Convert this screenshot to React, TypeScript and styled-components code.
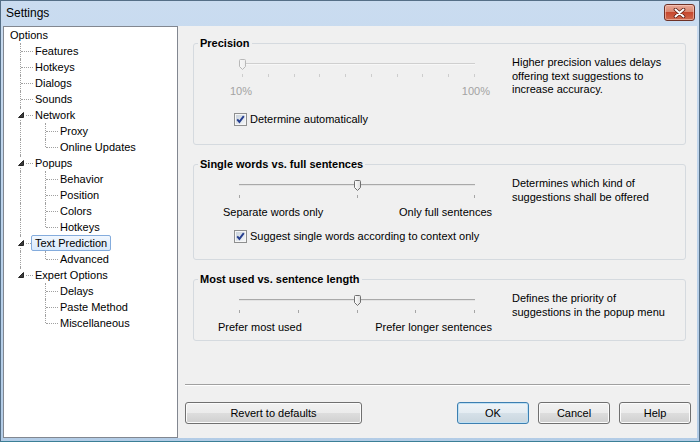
import * as React from "react";
import styled, { createGlobalStyle, css } from "styled-components";

const GlobalStyle = createGlobalStyle`
  html, body {
    margin: 0;
    padding: 0;
    background: #ffffff;
  }
  body {
    font-family: "Liberation Sans", Arial, sans-serif;
    font-size: 11px;
    color: #000;
  }
`;

type TreeNode = { label: string; children?: TreeNode[]; selected?: boolean };

const tree: TreeNode = {
  label: "Options",
  children: [
    { label: "Features" },
    { label: "Hotkeys" },
    { label: "Dialogs" },
    { label: "Sounds" },
    { label: "Network", children: [{ label: "Proxy" }, { label: "Online Updates" }] },
    {
      label: "Popups",
      children: [{ label: "Behavior" }, { label: "Position" }, { label: "Colors" }, { label: "Hotkeys" }],
    },
    { label: "Text Prediction", selected: true, children: [{ label: "Advanced" }] },
    {
      label: "Expert Options",
      children: [{ label: "Delays" }, { label: "Paste Method" }, { label: "Miscellaneous" }],
    },
  ],
};

type FlatRow = {
  label: string;
  depth: number;
  guides: boolean[];
  isLast: boolean;
  hasChildren: boolean;
  selected?: boolean;
};

const flatten = (node: TreeNode, depth: number, guides: boolean[], isLast: boolean): FlatRow[] => {
  const rows: FlatRow[] = [
    { label: node.label, depth, guides, isLast, hasChildren: !!node.children, selected: node.selected },
  ];
  const kids = node.children || [];
  kids.forEach((kid, i) => {
    const childGuides = depth === 0 ? [] : [...guides, !isLast];
    rows.push(...flatten(kid, depth + 1, childGuides, i === kids.length - 1));
  });
  return rows;
};

const rows = flatten(tree, 0, [], true);

export default function App() {
  return (
    <>
      <GlobalStyle />
      <Window>
        <TitleBar>
          <Title>Settings</Title>
          <CloseButton>
            <svg width="13" height="10" viewBox="0 0 13 10">
              <path d="M2.5 1.5 L10.5 8.5 M10.5 1.5 L2.5 8.5" stroke="#5b1c12" strokeWidth="3.6" strokeLinecap="round" />
              <path d="M2.5 1.5 L10.5 8.5 M10.5 1.5 L2.5 8.5" stroke="#ffffff" strokeWidth="2" strokeLinecap="round" />
            </svg>
          </CloseButton>
        </TitleBar>
        <Body>
          <TreePanel>
            {rows.map((r, i) => (
              <TreeRow key={i}>
                {r.guides.map((g, j) => (
                  <Guide key={j} $kind={g ? "pipe" : "blank"} />
                ))}
                {r.depth > 0 && (
                  <Guide $kind={r.isLast ? "ell" : "tee"}>
                    {r.hasChildren && (
                      <Expander>
                        <svg width="10" height="10" viewBox="0 0 10 10">
                          <polygon points="7.5,2.5 7.5,7.5 2.5,7.5" fill="#3c3c3c" stroke="#262626" strokeWidth="1" />
                        </svg>
                      </Expander>
                    )}
                  </Guide>
                )}
                <NodeLabel $selected={r.selected}>{r.label}</NodeLabel>
              </TreeRow>
            ))}
          </TreePanel>

          <RightPanel>
            <Groups>
              <Group $pb={18}>
                <Legend>Precision</Legend>
                <GroupRow>
                  <SliderColumn>
                    <Slider ml={24} width={233} ticks={10} value={0} disabled />
                    <SliderLabels $pl={12} $pr={2} $disabled>
                      <span>10%</span>
                      <span>100%</span>
                    </SliderLabels>
                    <CheckRow $gap={15}>
                      <Checkbox />
                      <span>Determine automatically</span>
                    </CheckRow>
                  </SliderColumn>
                  <Description>
                    Higher precision values delays
                    <br />
                    offering text suggestions to
                    <br />
                    increase accuracy.
                  </Description>
                </GroupRow>
              </Group>

              <Group $pb={16}>
                <Legend>Single words vs. full sentences</Legend>
                <GroupRow>
                  <SliderColumn>
                    <Slider ml={21} width={236} ticks={3} value={0.5} />
                    <SliderLabels $pl={5} $pr={0}>
                      <span>Separate words only</span>
                      <span>Only full sentences</span>
                    </SliderLabels>
                    <CheckRow $gap={11}>
                      <Checkbox />
                      <span>Suggest single words according to context only</span>
                    </CheckRow>
                  </SliderColumn>
                  <Description>
                    Determines which kind of
                    <br />
                    suggestions shall be offered
                  </Description>
                </GroupRow>
              </Group>

              <Group $pb={6}>
                <Legend>Most used vs. sentence length</Legend>
                <GroupRow>
                  <SliderColumn>
                    <Slider ml={21} width={236} ticks={5} value={0.5} />
                    <SliderLabels $pl={0} $pr={0}>
                      <span>Prefer most used</span>
                      <span>Prefer longer sentences</span>
                    </SliderLabels>
                  </SliderColumn>
                  <Description>
                    Defines the priority of
                    <br />
                    suggestions in the popup menu
                  </Description>
                </GroupRow>
              </Group>
            </Groups>

            <Footer>
              <Separator />
              <ButtonRow>
                <Button $width={177}>Revert to defaults</Button>
                <ButtonSpacer />
                <Button $width={72} $default>
                  OK
                </Button>
                <Button $width={72}>Cancel</Button>
                <Button $width={72}>Help</Button>
              </ButtonRow>
            </Footer>
          </RightPanel>
        </Body>
      </Window>
    </>
  );
}

const Slider = ({
  ml,
  width,
  ticks,
  value,
  disabled,
}: {
  ml: number;
  width: number;
  ticks: number;
  value: number;
  disabled?: boolean;
}) => {
  const id = React.useId();
  return (
    <SliderBox $ml={ml} $width={width}>
      <Track $disabled={disabled} />
      <Ticks>
        {Array.from({ length: ticks }).map((_, i) => (
          <Tick key={i} $disabled={disabled} />
        ))}
      </Ticks>
      <Thumb style={{ left: Math.round(value * (width - 1)) - 3 }}>
        <svg width="7" height="11" viewBox="0 0 7 11">
          <defs>
            <linearGradient id={id} x1="0" y1="0" x2="1" y2="0">
              <stop offset="0" stopColor={disabled ? "#f7f7f7" : "#ffffff"} />
              <stop offset="1" stopColor={disabled ? "#efefef" : "#dcdcdc"} />
            </linearGradient>
          </defs>
          <path
            d="M0.5 1.5 Q0.5 0.5 1.5 0.5 H5.5 Q6.5 0.5 6.5 1.5 V7.5 L3.5 10.5 L0.5 7.5 Z"
            fill={`url(#${id})`}
            stroke={disabled ? "#b8b8b8" : "#6f6f6f"}
          />
        </svg>
      </Thumb>
    </SliderBox>
  );
};

const Checkbox = () => {
  const id = React.useId();
  return (
    <svg width="13" height="13" viewBox="0 0 13 13">
      <defs>
        <linearGradient id={id} x1="0" y1="0" x2="1" y2="1">
          <stop offset="0" stopColor="#c9d2dc" />
          <stop offset="1" stopColor="#f4f6f8" />
        </linearGradient>
      </defs>
      <rect x="0.5" y="0.5" width="12" height="12" fill="#f6f6f6" stroke="#8e8f8f" />
      <rect x="2" y="2" width="9" height="9" fill={`url(#${id})`} />
      <path d="M3.2 6.4 L5.4 8.9 L9.8 3.2" stroke="#263f8f" strokeWidth="1.9" fill="none" />
    </svg>
  );
};

const Window = styled.div`
  width: 700px;
  height: 442px;
  box-sizing: border-box;
  display: flex;
  flex-direction: column;
  background: linear-gradient(#cadcf0, #b9d1ea 60%, #b3cce6);
  border: 1px solid #556f87;
  border-bottom-color: #3b7f96;
`;

const TitleBar = styled.div`
  height: 25px;
  flex-shrink: 0;
  display: flex;
  align-items: flex-start;
  justify-content: space-between;
  padding: 0 4px 0 5px;
`;

const Title = styled.div`
  font-size: 12px;
  line-height: 25px;
  color: #000;
`;

const CloseButton = styled.div`
  width: 31px;
  height: 17px;
  margin-top: 3px;
  box-sizing: border-box;
  display: flex;
  align-items: center;
  justify-content: center;
  border: 1px solid #6e3126;
  border-radius: 3px;
  background: linear-gradient(#e9a897 0%, #d98871 45%, #c7482e 50%, #cf6a4f 100%);
  box-shadow: inset 0 0 0 1px rgba(255, 220, 210, 0.5);
`;

const Body = styled.div`
  flex: 1;
  min-height: 0;
  display: flex;
  margin: 0 2px 3px 2px;
  background: #f0f0f0;
`;

const TreePanel = styled.div`
  width: 175px;
  flex-shrink: 0;
  box-sizing: border-box;
  background: #ffffff;
  border: 1px solid #828790;
  padding: 0 0 0 4px;
`;

const TreeRow = styled.div`
  height: 16px;
  display: flex;
  align-items: center;
`;

const Guide = styled.div<{ $kind: "pipe" | "tee" | "ell" | "blank" }>`
  position: relative;
  width: 25px;
  height: 16px;
  flex-shrink: 0;

  &::before {
    content: "";
    position: absolute;
    left: 12px;
    top: 0;
    width: 0;
    height: ${(p) => (p.$kind === "ell" ? "8px" : "16px")};
    border-left: 1px dotted #a0a0a0;
    display: ${(p) => (p.$kind === "blank" ? "none" : "block")};
  }

  &::after {
    content: "";
    position: absolute;
    left: 13px;
    top: 8px;
    width: 12px;
    height: 0;
    border-top: 1px dotted #a0a0a0;
    display: ${(p) => (p.$kind === "tee" || p.$kind === "ell" ? "block" : "none")};
  }
`;

const Expander = styled.div`
  position: absolute;
  left: 8px;
  top: 3px;
  width: 10px;
  height: 10px;
  background: #ffffff;
  z-index: 1;
  display: flex;

  svg {
    display: block;
  }
`;

const NodeLabel = styled.span<{ $selected?: boolean }>`
  position: relative;
  z-index: 2;
  margin-left: -2px;
  padding: 0 3px;
  border: 1px solid transparent;
  border-radius: 2px;
  line-height: 14px;
  white-space: nowrap;
  ${(p) =>
    p.$selected &&
    css`
      background: linear-gradient(#f1f7fe, #d9e9fc);
      border-color: #84acdd;
    `}
`;

const RightPanel = styled.div`
  flex: 1;
  min-width: 0;
  display: flex;
  flex-direction: column;
  padding: 10px 6px 14px 7px;
`;

const Groups = styled.div`
  display: flex;
  flex-direction: column;
  gap: 12px;
  margin: 0 5px 0 8px;
`;

const Group = styled.fieldset<{ $pb: number }>`
  margin: 0;
  min-width: 0;
  padding: 0 0 ${(p) => p.$pb}px 0;
  border: 1px solid #d5dadf;
  border-radius: 3px;
`;

const Legend = styled.legend`
  margin-left: 4px;
  padding: 0 2px;
  font-weight: bold;
  font-size: 11px;
  line-height: 14px;
  color: #000;
`;

const GroupRow = styled.div`
  display: flex;
  align-items: flex-start;
  padding: 6px 0 0 24px;
`;

const SliderColumn = styled.div`
  width: 274px;
  flex-shrink: 0;
  padding-top: 3px;
  display: flex;
  flex-direction: column;
`;

const SliderBox = styled.div<{ $ml: number; $width: number }>`
  position: relative;
  margin-left: ${(p) => p.$ml}px;
  width: ${(p) => p.$width}px;
  height: 20px;
`;

const Track = styled.div<{ $disabled?: boolean }>`
  margin-top: 4px;
  height: 1px;
  background: ${(p) => (p.$disabled ? "#cfcfcf" : "#a9a9a9")};
  border-bottom: 1px solid ${(p) => (p.$disabled ? "#f7f7f7" : "#e3e3e3")};
`;

const Ticks = styled.div`
  display: flex;
  justify-content: space-between;
  margin-top: 9px;
`;

const Tick = styled.div<{ $disabled?: boolean }>`
  width: 1px;
  height: 3px;
  background: ${(p) => (p.$disabled ? "#cdcdcd" : "#a5a5a5")};
`;

const Thumb = styled.div`
  position: absolute;
  top: 0;
  width: 7px;
  height: 11px;

  svg {
    display: block;
  }
`;

const SliderLabels = styled.div<{ $pl: number; $pr: number; $disabled?: boolean }>`
  display: flex;
  justify-content: space-between;
  margin-top: 6px;
  padding: 0 ${(p) => p.$pr}px 0 ${(p) => p.$pl}px;
  line-height: 13px;
  color: ${(p) => (p.$disabled ? "#a3a3a3" : "#000")};
  white-space: nowrap;
`;

const CheckRow = styled.div<{ $gap: number }>`
  display: flex;
  align-items: center;
  gap: 3px;
  margin: ${(p) => p.$gap}px 0 0 16px;
  line-height: 13px;
  white-space: nowrap;

  svg {
    display: block;
    flex-shrink: 0;
  }
`;

const Description = styled.div`
  margin-left: 20px;
  line-height: 13.5px;
  color: #000;
`;

const Footer = styled.div`
  margin-top: auto;
  display: flex;
  flex-direction: column;
`;

const Separator = styled.div`
  height: 0;
  border-top: 1px solid #a0a0a0;
  border-bottom: 1px solid #ffffff;
  margin: 0 1px 16px 0;
`;

const ButtonRow = styled.div`
  display: flex;
  gap: 9px;
`;

const ButtonSpacer = styled.div`
  flex: 1;
`;

const Button = styled.button<{ $width: number; $default?: boolean }>`
  width: ${(p) => p.$width}px;
  height: 22px;
  padding: 0;
  font-family: "Liberation Sans", Arial, sans-serif;
  font-size: 11px;
  color: #000;
  border: 1px solid #707070;
  border-radius: 3px;
  background: linear-gradient(#f2f2f2 0%, #ebebeb 50%, #dddddd 51%, #cfcfcf 100%);
  box-shadow: inset 0 0 0 1px #fbfbfb;
  ${(p) =>
    p.$default &&
    css`
      border-color: #3c7fb1;
      background: linear-gradient(#eef4f8 0%, #e4ecf2 50%, #d5e0e8 51%, #c9d6df 100%);
      box-shadow: inset 0 0 0 1px #bfe0f3;
    `}
`;
